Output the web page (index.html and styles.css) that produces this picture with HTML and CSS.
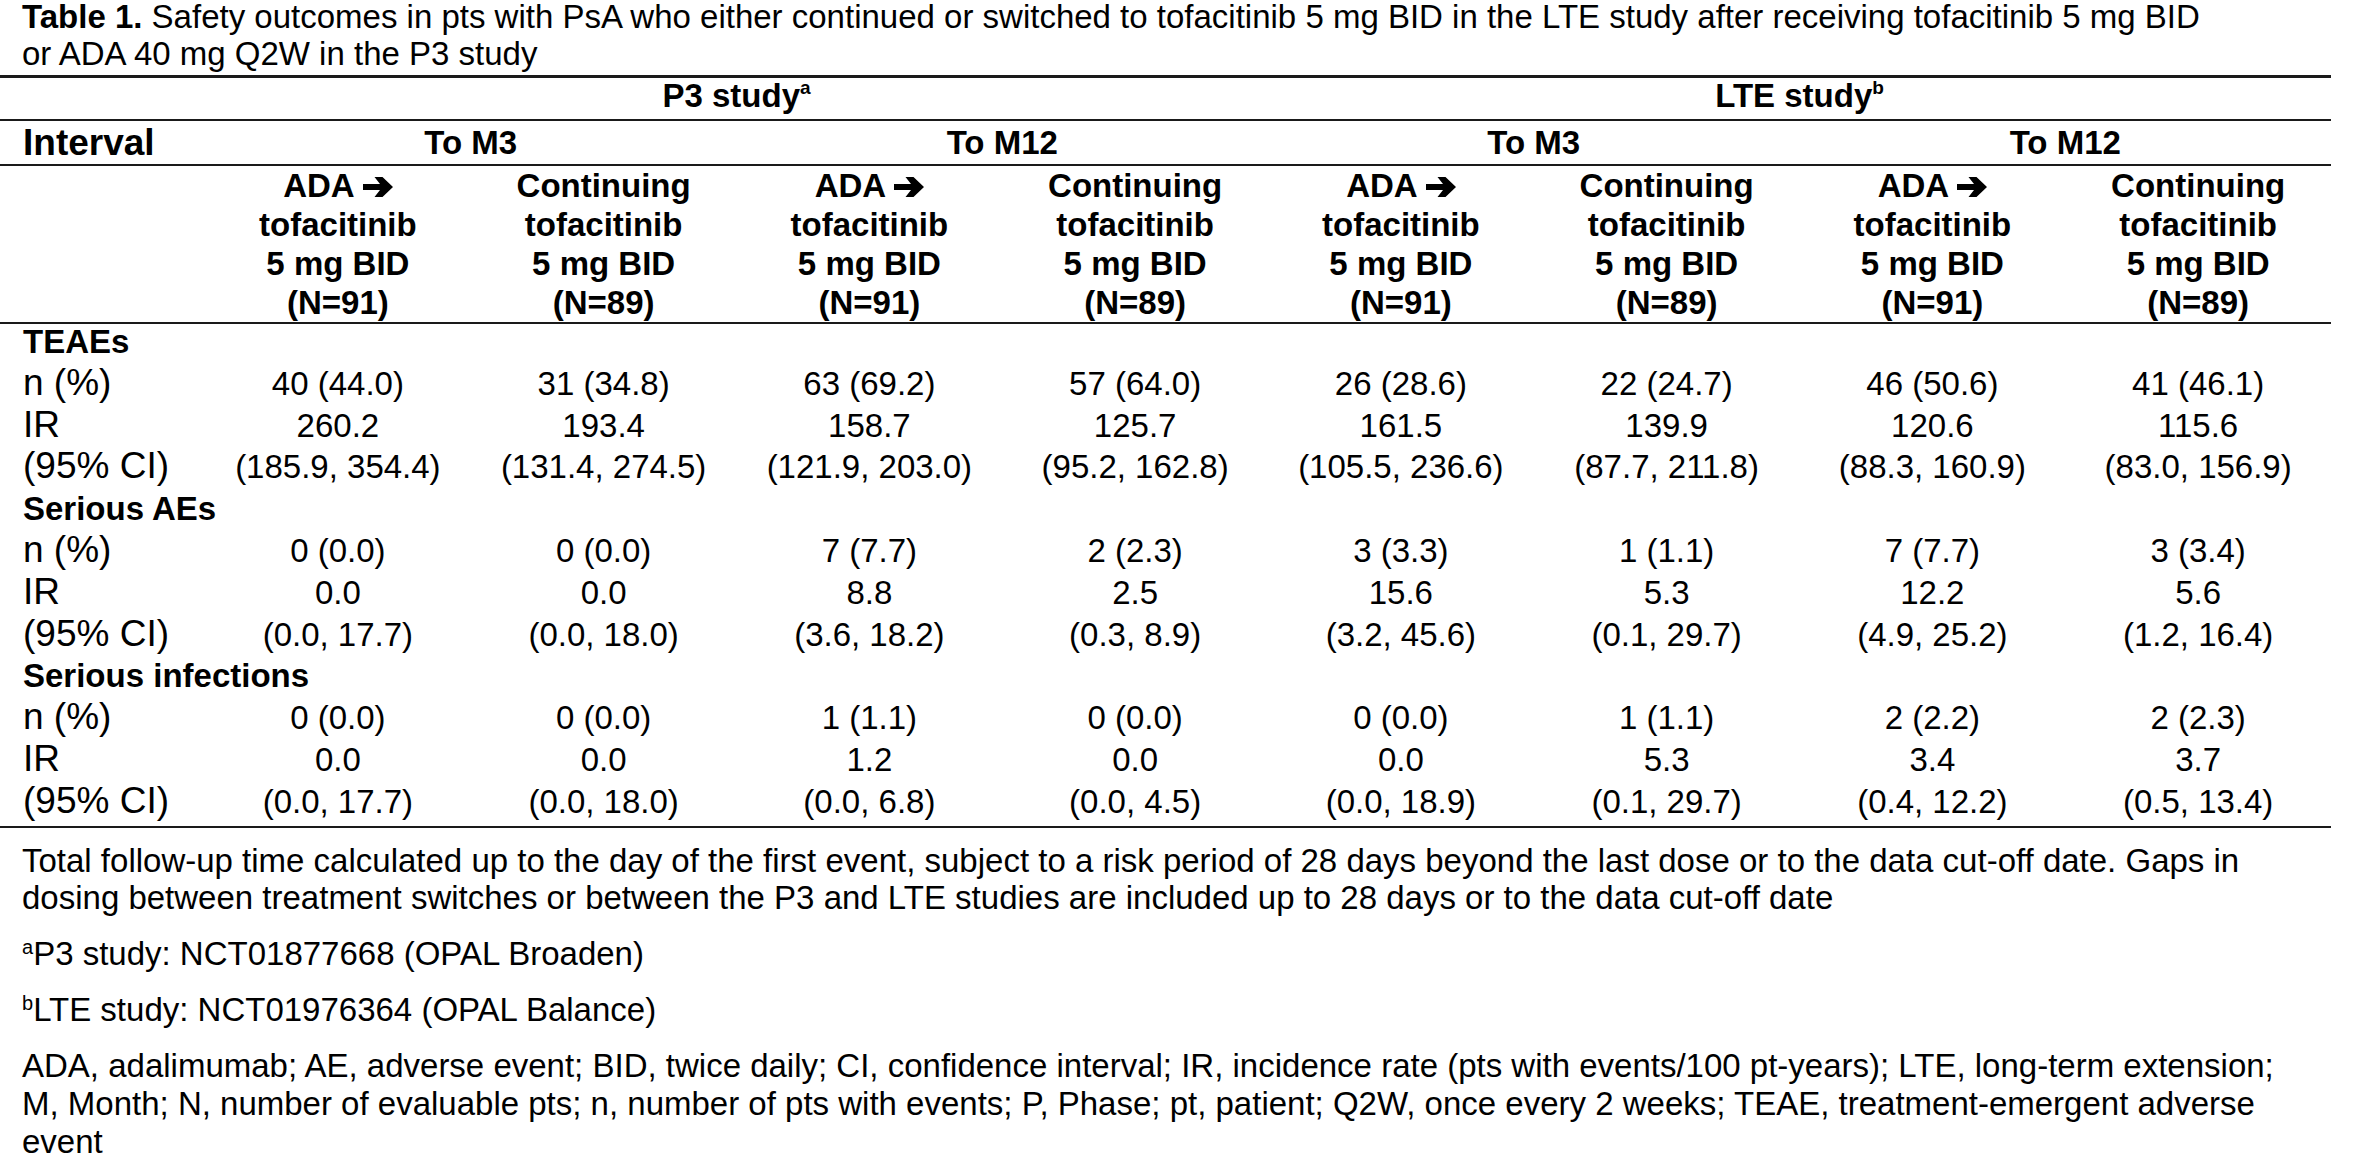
FILE: index.html
```html
<!DOCTYPE html>
<html lang="en">
<head>
<meta charset="utf-8">
<title>Table 1. Safety outcomes</title>
<link rel="stylesheet" href="styles.css">
</head>
<body>
<p class="title"><b>Table 1.</b> Safety outcomes in pts with PsA who either continued or switched to tofacitinib 5 mg BID in the LTE study after receiving tofacitinib 5 mg BID or ADA 40 mg Q2W in the P3 study</p>
<table class="safety">
  <colgroup>
    <col class="label-col">
    <col class="data-col"><col class="data-col"><col class="data-col"><col class="data-col">
    <col class="data-col"><col class="data-col"><col class="data-col"><col class="data-col">
  </colgroup>
  <thead>
    <tr class="study-row">
      <th></th>
      <th colspan="4">P3 study<sup>a</sup></th>
      <th colspan="4">LTE study<sup>b</sup></th>
    </tr>
    <tr class="interval-row">
      <th class="rowhead">Interval</th>
      <th colspan="2">To M3</th>
      <th colspan="2">To M12</th>
      <th colspan="2">To M3</th>
      <th colspan="2">To M12</th>
    </tr>
    <tr class="group-row">
      <th></th>
      <th>ADA <svg class="arrow" viewBox="0 0 30 20" aria-hidden="true"><path d="M0 7H17L11.5 0H19.5L30 10L19.5 20H11.5L17 13H0Z"/></svg><br>tofacitinib<br>5 mg BID<br>(N=91)</th>
      <th>Continuing<br>tofacitinib<br>5 mg BID<br>(N=89)</th>
      <th>ADA <svg class="arrow" viewBox="0 0 30 20" aria-hidden="true"><path d="M0 7H17L11.5 0H19.5L30 10L19.5 20H11.5L17 13H0Z"/></svg><br>tofacitinib<br>5 mg BID<br>(N=91)</th>
      <th>Continuing<br>tofacitinib<br>5 mg BID<br>(N=89)</th>
      <th>ADA <svg class="arrow" viewBox="0 0 30 20" aria-hidden="true"><path d="M0 7H17L11.5 0H19.5L30 10L19.5 20H11.5L17 13H0Z"/></svg><br>tofacitinib<br>5 mg BID<br>(N=91)</th>
      <th>Continuing<br>tofacitinib<br>5 mg BID<br>(N=89)</th>
      <th>ADA <svg class="arrow" viewBox="0 0 30 20" aria-hidden="true"><path d="M0 7H17L11.5 0H19.5L30 10L19.5 20H11.5L17 13H0Z"/></svg><br>tofacitinib<br>5 mg BID<br>(N=91)</th>
      <th>Continuing<br>tofacitinib<br>5 mg BID<br>(N=89)</th>
    </tr>
  </thead>
  <tbody>
    <tr><td class="section" colspan="9">TEAEs</td></tr>
    <tr><td class="label">n (%)</td><td>40 (44.0)</td><td>31 (34.8)</td><td>63 (69.2)</td><td>57 (64.0)</td><td>26 (28.6)</td><td>22 (24.7)</td><td>46 (50.6)</td><td>41 (46.1)</td></tr>
    <tr><td class="label">IR</td><td>260.2</td><td>193.4</td><td>158.7</td><td>125.7</td><td>161.5</td><td>139.9</td><td>120.6</td><td>115.6</td></tr>
    <tr><td class="label">(95% CI)</td><td>(185.9, 354.4)</td><td>(131.4, 274.5)</td><td>(121.9, 203.0)</td><td>(95.2, 162.8)</td><td>(105.5, 236.6)</td><td>(87.7, 211.8)</td><td>(88.3, 160.9)</td><td>(83.0, 156.9)</td></tr>
    <tr><td class="section" colspan="9">Serious AEs</td></tr>
    <tr><td class="label">n (%)</td><td>0 (0.0)</td><td>0 (0.0)</td><td>7 (7.7)</td><td>2 (2.3)</td><td>3 (3.3)</td><td>1 (1.1)</td><td>7 (7.7)</td><td>3 (3.4)</td></tr>
    <tr><td class="label">IR</td><td>0.0</td><td>0.0</td><td>8.8</td><td>2.5</td><td>15.6</td><td>5.3</td><td>12.2</td><td>5.6</td></tr>
    <tr><td class="label">(95% CI)</td><td>(0.0, 17.7)</td><td>(0.0, 18.0)</td><td>(3.6, 18.2)</td><td>(0.3, 8.9)</td><td>(3.2, 45.6)</td><td>(0.1, 29.7)</td><td>(4.9, 25.2)</td><td>(1.2, 16.4)</td></tr>
    <tr><td class="section" colspan="9">Serious infections</td></tr>
    <tr><td class="label">n (%)</td><td>0 (0.0)</td><td>0 (0.0)</td><td>1 (1.1)</td><td>0 (0.0)</td><td>0 (0.0)</td><td>1 (1.1)</td><td>2 (2.2)</td><td>2 (2.3)</td></tr>
    <tr><td class="label">IR</td><td>0.0</td><td>0.0</td><td>1.2</td><td>0.0</td><td>0.0</td><td>5.3</td><td>3.4</td><td>3.7</td></tr>
    <tr class="last-row"><td class="label">(95% CI)</td><td>(0.0, 17.7)</td><td>(0.0, 18.0)</td><td>(0.0, 6.8)</td><td>(0.0, 4.5)</td><td>(0.0, 18.9)</td><td>(0.1, 29.7)</td><td>(0.4, 12.2)</td><td>(0.5, 13.4)</td></tr>
  </tbody>
</table>
<div class="notes">
  <p>Total follow-up time calculated up to the day of the first event, subject to a risk period of 28 days beyond the last dose or to the data cut-off date. Gaps in dosing between treatment switches or between the P3 and LTE studies are included up to 28 days or to the data cut-off date</p>
  <p><sup>a</sup>P3 study: NCT01877668 (OPAL Broaden)</p>
  <p><sup>b</sup>LTE study: NCT01976364 (OPAL Balance)</p>
  <p>ADA, adalimumab; AE, adverse event; BID, twice daily; CI, confidence interval; IR, incidence rate (pts with events/100 pt-years); LTE, long-term extension; M, Month; N, number of evaluable pts; n, number of pts with events; P, Phase; pt, patient; Q2W, once every 2 weeks; TEAE, treatment-emergent adverse event</p>
</div>
</body>
</html>
```

FILE: styles.css
```css
html, body {
  margin: 0;
  padding: 0;
  background: #ffffff;
}

body {
  font-family: "Liberation Sans", Arial, sans-serif;
  color: #000000;
  width: 2361px;
}

.title {
  font-size: 33px;
  line-height: 37px;
  margin: -2px 0 3px 0;
  padding-left: 22px;
  width: 2208px;
}

.title b {
  font-weight: 700;
}

.safety {
  border-collapse: separate;
  border-spacing: 0;
  table-layout: fixed;
  width: 2331px;
  font-size: 33px;
}

.label-col {
  width: 205px;
}

.data-col {
  width: 265.75px;
}

.safety th,
.safety td {
  padding: 0;
  text-align: center;
  vertical-align: top;
  white-space: nowrap;
}

.safety th {
  font-weight: 700;
}

.safety sup {
  font-size: 19px;
  line-height: 0;
  vertical-align: 13px;
  font-weight: 700;
}

.study-row th {
  border-top: 3px solid #1a1a1a;
  border-bottom: 2px solid #1a1a1a;
  line-height: 35px;
  padding-bottom: 6px;
}

.interval-row th {
  border-bottom: 2px solid #1a1a1a;
  line-height: 43px;
}

.interval-row .rowhead {
  text-align: left;
  padding-left: 23px;
  font-size: 37px;
}

.group-row th {
  border-bottom: 2px solid #1a1a1a;
  line-height: 39px;
}

.arrow {
  width: 30px;
  height: 20px;
  vertical-align: 0;
  fill: #000000;
}

.safety td {
  height: 41.8px;
  line-height: 36px;
}

.safety td.label {
  text-align: left;
  padding-left: 23px;
  font-size: 37px;
  line-height: 33px;
}

.safety td.section {
  text-align: left;
  padding-left: 23px;
  font-weight: 700;
}

.safety .last-row td {
  border-bottom: 2px solid #1a1a1a;
}

.notes {
  margin-top: 14px;
  padding: 0 22px;
  width: 2287px;
  font-size: 33px;
  line-height: 37.7px;
}

.notes p {
  margin: 0 0 18.3px 0;
}

.notes sup {
  font-size: 20px;
  line-height: 0;
  vertical-align: 11px;
}
```
